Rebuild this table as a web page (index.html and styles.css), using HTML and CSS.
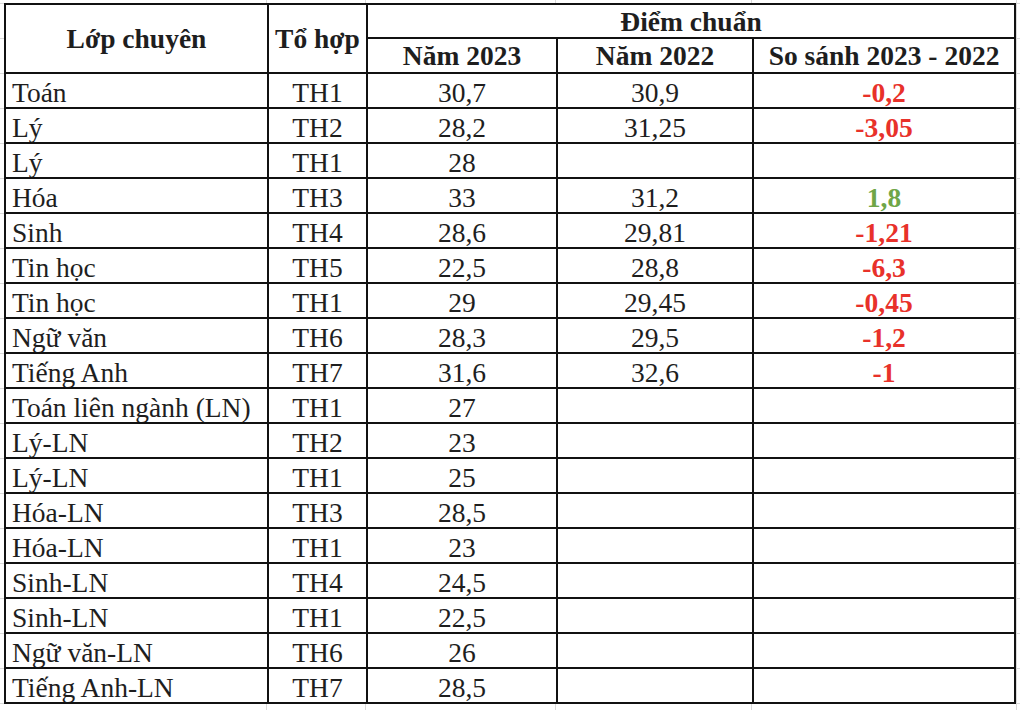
FILE: index.html
```html
<!DOCTYPE html>
<html lang="vi">
<head>
<meta charset="utf-8">
<title>Điểm chuẩn</title>
<link rel="stylesheet" href="styles.css">
</head>
<body>
<table class="sheet">
  <colgroup>
    <col class="c-lop">
    <col class="c-th">
    <col class="c-y23">
    <col class="c-y22">
    <col class="c-cmp">
  </colgroup>
  <thead>
    <tr class="h1">
      <th rowspan="2">Lớp chuyên</th>
      <th rowspan="2">Tổ hợp</th>
      <th colspan="3">Điểm chuẩn</th>
    </tr>
    <tr class="h2">
      <th>Năm 2023</th>
      <th>Năm 2022</th>
      <th>So sánh 2023 - 2022</th>
    </tr>
  </thead>
  <tbody>
    <tr><td class="name">Toán</td><td>TH1</td><td>30,7</td><td>30,9</td><td class="neg">-0,2</td></tr>
    <tr><td class="name">Lý</td><td>TH2</td><td>28,2</td><td>31,25</td><td class="neg">-3,05</td></tr>
    <tr><td class="name">Lý</td><td>TH1</td><td>28</td><td></td><td></td></tr>
    <tr><td class="name">Hóa</td><td>TH3</td><td>33</td><td>31,2</td><td class="pos">1,8</td></tr>
    <tr><td class="name">Sinh</td><td>TH4</td><td>28,6</td><td>29,81</td><td class="neg">-1,21</td></tr>
    <tr><td class="name">Tin học</td><td>TH5</td><td>22,5</td><td>28,8</td><td class="neg">-6,3</td></tr>
    <tr><td class="name">Tin học</td><td>TH1</td><td>29</td><td>29,45</td><td class="neg">-0,45</td></tr>
    <tr><td class="name">Ngữ văn</td><td>TH6</td><td>28,3</td><td>29,5</td><td class="neg">-1,2</td></tr>
    <tr><td class="name">Tiếng Anh</td><td>TH7</td><td>31,6</td><td>32,6</td><td class="neg">-1</td></tr>
    <tr><td class="name">Toán liên ngành (LN)</td><td>TH1</td><td>27</td><td></td><td></td></tr>
    <tr><td class="name">Lý-LN</td><td>TH2</td><td>23</td><td></td><td></td></tr>
    <tr><td class="name">Lý-LN</td><td>TH1</td><td>25</td><td></td><td></td></tr>
    <tr><td class="name">Hóa-LN</td><td>TH3</td><td>28,5</td><td></td><td></td></tr>
    <tr><td class="name">Hóa-LN</td><td>TH1</td><td>23</td><td></td><td></td></tr>
    <tr><td class="name">Sinh-LN</td><td>TH4</td><td>24,5</td><td></td><td></td></tr>
    <tr><td class="name">Sinh-LN</td><td>TH1</td><td>22,5</td><td></td><td></td></tr>
    <tr><td class="name">Ngữ văn-LN</td><td>TH6</td><td>26</td><td></td><td></td></tr>
    <tr><td class="name">Tiếng Anh-LN</td><td>TH7</td><td>28,5</td><td></td><td></td></tr>
  </tbody>
</table>
</body>
</html>
```
FILE: styles.css
```css
html, body {
  margin: 0;
  padding: 0;
}
body {
  width: 1020px;
  height: 710px;
  overflow: hidden;
  box-sizing: border-box;
  padding: 3px 0 0 4px;
  background-color: #fff;
  background-image:
    linear-gradient(90deg,
      transparent 0 266px, #d9d9d9 266px 267px,
      transparent 267px 365px, #d9d9d9 365px 366px,
      transparent 366px 555px, #d9d9d9 555px 556px,
      transparent 556px 751px, #d9d9d9 751px 752px,
      transparent 752px 1016px, #d9d9d9 1016px 1017px,
      transparent 1017px),
    repeating-linear-gradient(180deg, #d9d9d9 0 1px, transparent 1px 35px);
  background-position: 0 0, 0 3px;
  font-family: "Liberation Serif", "Times New Roman", serif;
  color: #1e1e1e;
}
.sheet {
  border-collapse: collapse;
  table-layout: fixed;
  width: 1010px;
  background: #fff;
  font-size: 27.5px;
  line-height: 1;
}
.c-lop { width: 263px; }
.c-th { width: 99px; }
.c-y23 { width: 190px; }
.c-y22 { width: 196px; }
.c-cmp { width: 262px; }

.sheet th,
.sheet td {
  border: 2px solid #111;
  padding: 0;
  white-space: nowrap;
  overflow: hidden;
}
.sheet th {
  font-weight: bold;
  text-align: center;
  vertical-align: middle;
  padding-top: 1px;
}
.h1 { height: 34px; }
.h2 { height: 35px; }
.sheet tbody tr { height: 35px; }
.sheet td {
  text-align: center;
  vertical-align: bottom;
  padding-bottom: 1px;
}
.sheet td.name {
  text-align: left;
  padding-left: 6px;
}
.neg {
  color: #e8312a;
  font-weight: bold;
}
.pos {
  color: #6fa648;
  font-weight: bold;
}
```
